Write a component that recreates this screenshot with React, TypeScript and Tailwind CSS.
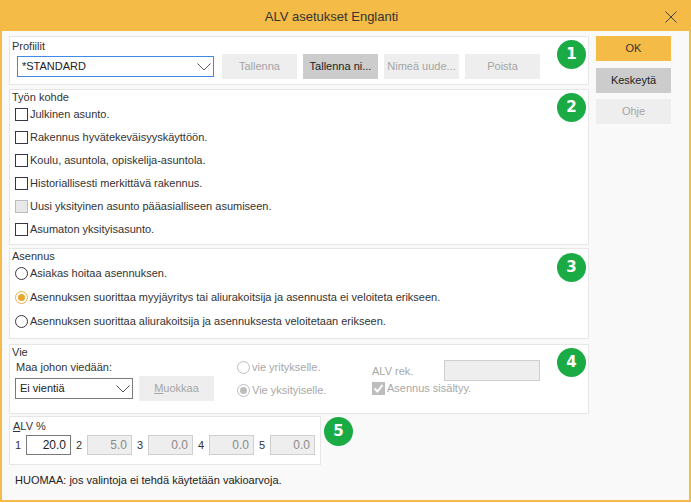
import React from "react";

function Badge({ n }: { n: number }) {
  return (
    <span className="flex h-[29px] w-[29px] items-center justify-center rounded-full bg-[#1bab45] font-['DejaVu_Sans',sans-serif] text-[15px] font-bold text-white">
      {n}
    </span>
  );
}

function Chevron() {
  return (
    <svg width="14" height="8" viewBox="0 0 14 8" className="shrink-0">
      <polyline points="0.5,0.5 7,7 13.5,0.5" fill="none" stroke="#555" strokeWidth="1" />
    </svg>
  );
}

function Box({ gray, checked }: { gray?: boolean; checked?: boolean }) {
  if (checked) {
    return (
      <span className="flex h-[13px] w-[13px] shrink-0 items-center justify-center bg-[#bdbdbd]">
        <svg width="11" height="11" viewBox="0 0 11 11">
          <polyline points="1.5,5.5 4.5,8.5 9.5,2" fill="none" stroke="#fff" strokeWidth="2" />
        </svg>
      </span>
    );
  }
  return (
    <span
      className={
        gray
          ? "h-[13px] w-[13px] shrink-0 border border-[#bcbcbc] bg-[#e8e8e8]"
          : "h-[13px] w-[13px] shrink-0 border border-[#3b3446] bg-white"
      }
    />
  );
}

function Radio({ on, disabled }: { on?: boolean; disabled?: boolean }) {
  const ring = disabled
    ? "border-[#bdbdbd]"
    : on
    ? "border-[#e9b04a]"
    : "border-[#3b3446]";
  const dot = disabled ? "bg-[#bdbdbd]" : "bg-[#e5a833]";
  return (
    <span className={`flex h-[13px] w-[13px] shrink-0 items-center justify-center rounded-full border bg-white ${ring}`}>
      {on && <span className={`h-[7px] w-[7px] rounded-full ${dot}`} />}
    </span>
  );
}

function Btn({ label, kind }: { label: React.ReactNode; kind: "off" | "on" | "ok" }) {
  const c =
    kind === "ok"
      ? "bg-[#f4bb46] text-[#333]"
      : kind === "on"
      ? "bg-[#cccccc] text-[#222]"
      : "bg-[#eeeeee] text-[#a5a5a5]";
  return (
    <div className={`flex h-[25px] w-[75px] shrink-0 items-center justify-center truncate px-[4px] ${c}`}>
      {label}
    </div>
  );
}

export default function App() {
  const checks = [
    "Julkinen asunto.",
    "Rakennus hyvätekeväisyyskäyttöön.",
    "Koulu, asuntola, opiskelija-asuntola.",
    "Historiallisesti merkittävä rakennus.",
    "Uusi yksityinen asunto pääasialliseen asumiseen.",
    "Asumaton yksityisasunto.",
  ];
  const rates = ["20.0", "5.0", "0.0", "0.0", "0.0"];

  return (
    <div className="flex h-[502px] w-[691px] flex-col border-2 border-[#f4bb46] bg-[#f9f9f9] font-['Liberation_Sans',Arial,sans-serif] text-[11px] text-[#333]">
      {/* title */}
      <div className="flex h-[29px] shrink-0 items-center bg-[#f4bb46]">
        <div className="flex-1 pl-[8px] text-center text-[13px] text-[#333]">ALV asetukset Englanti</div>
        <div className="flex w-[36px] justify-center">
          <svg width="12" height="12" viewBox="0 0 12 12">
            <path d="M0.5 0.5 L11.5 11.5 M11.5 0.5 L0.5 11.5" stroke="#444" strokeWidth="1" />
          </svg>
        </div>
      </div>

      <div className="flex flex-1 pl-[7px] pt-[5px]">
        <div className="flex w-[580px] flex-col">
          {/* Profiilit */}
          <div className="relative h-[49px] border border-[#e6e6e6] bg-white pl-[2px]">
            <div className="h-[16px] pt-[2px] leading-[14px]">Profiilit</div>
            <div className="ml-[5px] mt-[1px] flex items-center">
              <div className="flex h-[21px] w-[197px] items-center justify-between border border-[#3d8be6] pl-[4px] pr-[2px] text-[#222]">
                <span>*STANDARD</span>
                <Chevron />
              </div>
              <div className="ml-[8px] flex gap-[6px]">
                <Btn label="Tallenna" kind="off" />
                <Btn label="Tallenna ni..." kind="on" />
                <Btn label="Nimeä uude..." kind="off" />
                <Btn label="Poista" kind="off" />
              </div>
            </div>
            <div className="absolute right-[2px] top-[3px]">
              <Badge n={1} />
            </div>
          </div>

          {/* Työn kohde */}
          <div className="relative mt-[4px] h-[156px] border border-[#e6e6e6] bg-white">
            <div className="h-[13px] pl-[2px] leading-[14px]">Työn kohde</div>
            {checks.map((t, i) => (
              <div key={t} className="flex h-[23px] items-center gap-[2px] pl-[5px]">
                <Box gray={i === 4} />
                <span>{t}</span>
              </div>
            ))}
            <div className="absolute right-[2px] top-[3px]">
              <Badge n={2} />
            </div>
          </div>

          {/* Asennus */}
          <div className="relative mt-[3px] h-[91px] border border-[#e6e6e6] bg-white">
            <div className="h-[12px] pl-[2px] leading-[14px]">Asennus</div>
            <div className="flex h-[24px] items-center gap-[2px] pl-[5px]">
              <Radio />
              <span>Asiakas hoitaa asennuksen.</span>
            </div>
            <div className="flex h-[24px] items-center gap-[2px] pl-[5px]">
              <Radio on />
              <span>Asennuksen suorittaa myyjäyritys tai aliurakoitsija ja asennusta ei veloiteta erikseen.</span>
            </div>
            <div className="flex h-[24px] items-center gap-[2px] pl-[5px]">
              <Radio />
              <span>Asennuksen suorittaa aliurakoitsija ja asennuksesta veloitetaan erikseen.</span>
            </div>
            <div className="absolute right-[2px] top-[4px]">
              <Badge n={3} />
            </div>
          </div>

          {/* Vie */}
          <div className="relative mt-[5px] h-[70px] border border-[#e6e6e6] bg-white">
            <div className="h-[15px] pl-[2px] leading-[14px]">Vie</div>
            <div className="flex">
              <div className="w-[204px] pl-[5px]">
                <div className="h-[14px] pl-[1px] leading-[14px]">Maa johon viedään:</div>
                <div className="mt-[2px] flex h-[25px] items-center">
                  <div className="flex h-[21px] w-[123px] items-center justify-between border border-[#7a7a7a] pl-[4px] pr-[2px] text-[#222]">
                    <span>Ei vientiä</span>
                    <Chevron />
                  </div>
                  <div className="ml-[6px]">
                    <Btn
                      kind="off"
                      label={
                        <span>
                          <span className="underline">M</span>uokkaa
                        </span>
                      }
                    />
                  </div>
                </div>
              </div>
              <div className="ml-[23px] w-[135px] text-[#a8a8a8]">
                <div className="flex h-[14px] items-center gap-[2px]">
                  <Radio disabled />
                  <span>vie yritykselle.</span>
                </div>
                <div className="mt-[9px] flex h-[14px] items-center gap-[2px]">
                  <Radio on disabled />
                  <span>Vie yksityiselle.</span>
                </div>
              </div>
              <div className="text-[#a8a8a8]">
                <div className="flex h-[21px] items-center">
                  <span className="w-[72px] pt-[2px]">ALV rek.</span>
                  <span className="h-[21px] w-[96px] border border-[#cfcfcf] bg-[#eeeeee]" />
                </div>
                <div className="flex h-[14px] items-center gap-[2px]">
                  <Box checked />
                  <span>Asennus sisältyy.</span>
                </div>
              </div>
            </div>
            <div className="absolute right-[2px] top-[3px]">
              <Badge n={4} />
            </div>
          </div>

          {/* ALV % */}
          <div className="mt-[2px] flex items-start">
            <div className="h-[49px] w-[312px] border border-[#e6e6e6] bg-white">
              <div className="h-[16px] pl-[3px] pt-[2px] leading-[14px]">
                <span className="underline">A</span>LV %
              </div>
              <div className="mt-[2px] flex h-[20px] items-center gap-[5px] pl-[5px]">
                {rates.map((r, i) => (
                  <React.Fragment key={i}>
                    <span className="w-[6px]">{i + 1}</span>
                    <span
                      className={
                        i === 0
                          ? "flex h-[20px] w-[45px] items-center justify-end border border-[#7a7a7a] bg-white pr-[4px] text-[12px] text-[#222]"
                          : "flex h-[20px] w-[45px] items-center justify-end border border-[#cfcfcf] bg-[#eeeeee] pr-[4px] text-[12px] text-[#8a8a8a]"
                      }
                    >
                      {r}
                    </span>
                  </React.Fragment>
                ))}
              </div>
            </div>
            <div className="ml-[3px] mt-[1px]">
              <Badge n={5} />
            </div>
          </div>

          <div className="mt-[8px] pl-[6px] leading-[14px] text-[#222]">
            HUOMAA: jos valintoja ei tehdä käytetään vakioarvoja.
          </div>
        </div>

        {/* right buttons */}
        <div className="ml-[7px] flex flex-col">
          <Btn label="OK" kind="ok" />
          <div className="mt-[7px]">
            <Btn label="Keskeytä" kind="on" />
          </div>
          <div className="mt-[6px]">
            <Btn label="Ohje" kind="off" />
          </div>
        </div>
      </div>
    </div>
  );
}
